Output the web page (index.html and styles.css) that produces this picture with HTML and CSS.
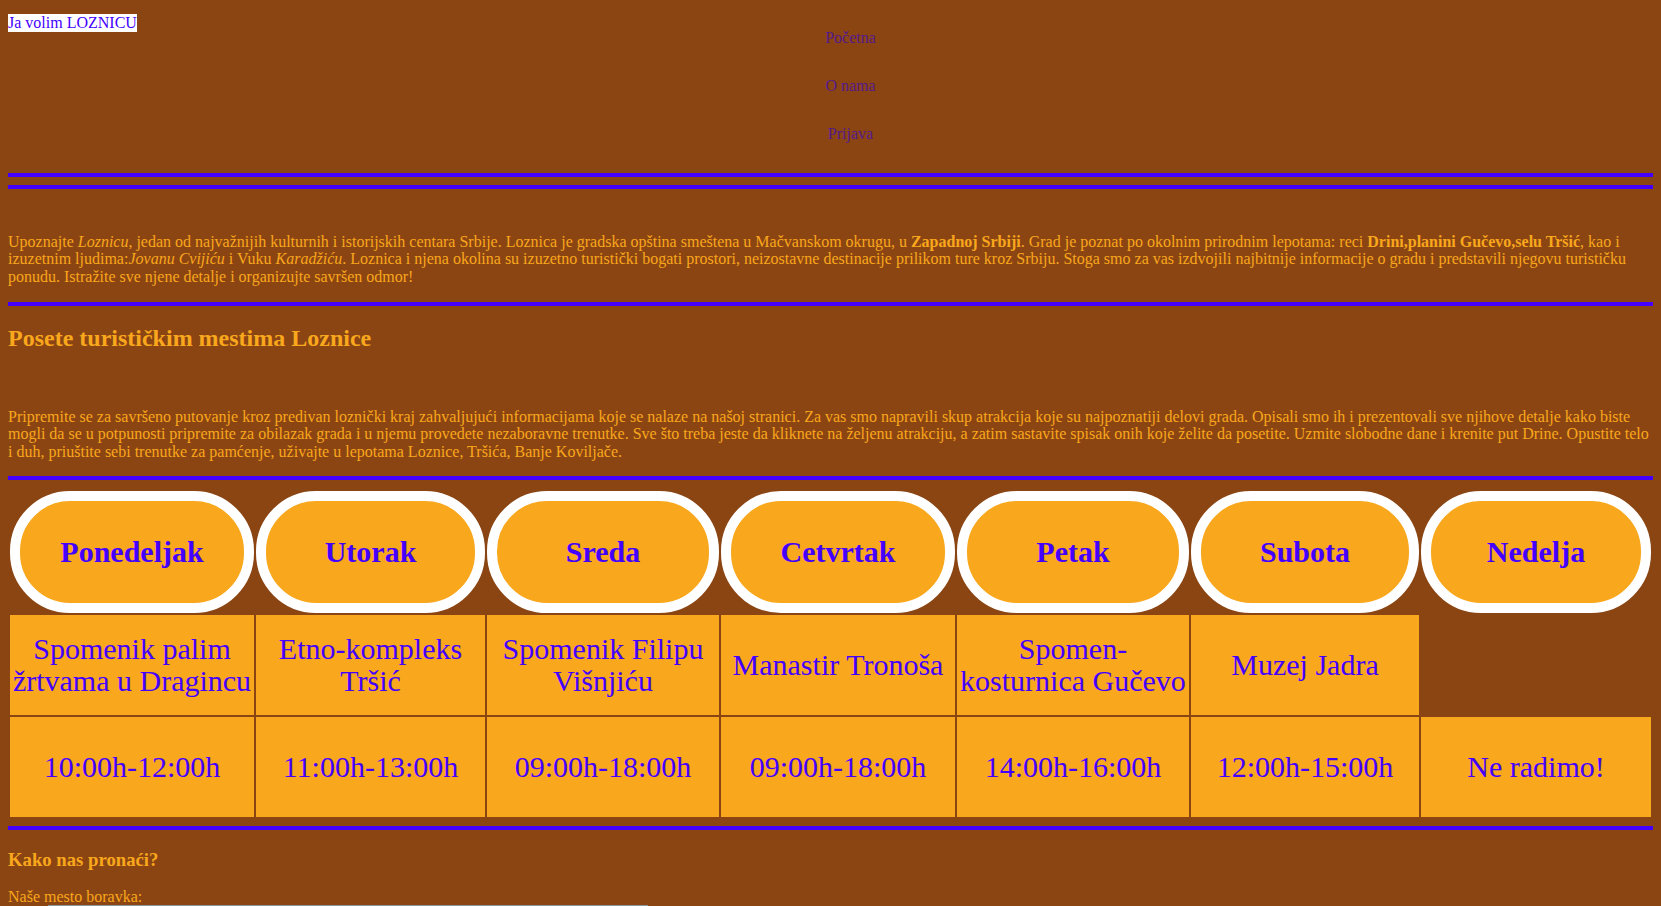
FILE: index.html
```html
<!DOCTYPE html>
<html lang="sr">
<head>
<meta charset="utf-8">
<title>Ja volim LOZNICU</title>
<link rel="stylesheet" href="styles.css">
</head>
<body>
<header class="top">
  <div class="logo"><span class="logo-text">Ja volim LOZNICU</span></div>
  <ul class="nav">
    <li class="nav-item"><a class="nav-link" href="#">Početna</a></li>
    <li class="nav-item"><a class="nav-link" href="#">O nama</a></li>
    <li class="nav-item"><a class="nav-link" href="#">Prijava</a></li>
  </ul>
</header>
<hr class="rule rule-first">
<hr class="rule rule-second">
<p class="text intro">Upoznajte <em>Loznicu</em>, jedan od najvažnijih kulturnih i istorijskih centara Srbije. Loznica je gradska opština smeštena u Mačvanskom okrugu, u <strong>Zapadnoj Srbiji</strong>. Grad je poznat po okolnim prirodnim lepotama: reci <strong>Drini,planini Gučevo,selu Tršić</strong>, kao i izuzetnim ljudima:<em>Jovanu Cvijiću</em> i Vuku <em>Karadžiću</em>. Loznica i njena okolina su izuzetno turistički bogati prostori, neizostavne destinacije prilikom ture kroz Srbiju. Stoga smo za vas izdvojili najbitnije informacije o gradu i predstavili njegovu turističku ponudu. Istražite sve njene detalje i organizujte savršen odmor!</p>
<hr class="rule rule-after-intro">
<h2 class="title">Posete turističkim mestima Loznice</h2>
<p class="text visits">Pripremite se za savršeno putovanje kroz predivan loznički kraj zahvaljujući informacijama koje se nalaze na našoj stranici. Za vas smo napravili skup atrakcija koje su najpoznatiji delovi grada. Opisali smo ih i prezentovali sve njihove detalje kako biste mogli da se u potpunosti pripremite za obilazak grada i u njemu provedete nezaboravne trenutke. Sve što treba jeste da kliknete na željenu atrakciju, a zatim sastavite spisak onih koje želite da posetite. Uzmite slobodne dane i krenite put Drine. Opustite telo i duh, priuštite sebi trenutke za pamćenje, uživajte u lepotama Loznice, Tršića, Banje Koviljače.</p>
<hr class="rule rule-after-visits">
<table class="schedule">
  <tr>
    <th class="day">Ponedeljak</th>
    <th class="day">Utorak</th>
    <th class="day">Sreda</th>
    <th class="day">Cetvrtak</th>
    <th class="day">Petak</th>
    <th class="day">Subota</th>
    <th class="day">Nedelja</th>
  </tr>
  <tr>
    <td class="cell">Spomenik palim žrtvama u Dragincu</td>
    <td class="cell">Etno-kompleks Tršić</td>
    <td class="cell">Spomenik Filipu Višnjiću</td>
    <td class="cell">Manastir Tronoša</td>
    <td class="cell">Spomen-kosturnica Gučevo</td>
    <td class="cell">Muzej Jadra</td>
  </tr>
  <tr>
    <td class="cell">10:00h-12:00h</td>
    <td class="cell">11:00h-13:00h</td>
    <td class="cell">09:00h-18:00h</td>
    <td class="cell">09:00h-18:00h</td>
    <td class="cell">14:00h-16:00h</td>
    <td class="cell">12:00h-15:00h</td>
    <td class="cell">Ne radimo!</td>
  </tr>
</table>
<hr class="rule rule-after-table">
<h3 class="subtitle">Kako nas pronaći?</h3>
<p class="text location">Naše mesto boravka:</p>
<div class="map"></div>
</body>
</html>
```

FILE: styles.css
```css
html {
  background: #8b4513;
}

body {
  margin: 8px;
  background: #8b4513;
  color: #f9a71c;
  font-family: "Liberation Serif", "Times New Roman", serif;
  font-size: 16px;
}

.top {
  display: grid;
}

.logo,
.nav {
  grid-area: 1 / 1;
}

.logo {
  justify-self: start;
  align-self: start;
  margin-top: 6px;
  font-size: 16px;
  line-height: 18px;
}

.logo-text {
  display: inline-block;
  background: #ffffff;
  color: #4400ff;
}

.nav {
  list-style: none;
  margin: 6px 0 0;
  padding: 0 0 0 40px;
  text-align: center;
  font-size: 16px;
}

.nav-item {
  padding: 14.75px 0;
  line-height: 18.4px;
}

.nav-link {
  color: #551a8b;
  text-decoration: none;
}

.rule {
  display: block;
  height: 4px;
  border: none;
  background: #4400ff;
  margin: 0;
}

.rule-first {
  margin-top: 15px;
}

.rule-second {
  margin-top: 8px;
}

.text {
  margin: 0;
  font-size: 16px;
  line-height: 17.5px;
}

.intro {
  margin-top: 44px;
}

.rule-after-intro {
  margin-top: 17px;
}

.title {
  margin: 19px 0 0;
  font-size: 24px;
  line-height: 27.6px;
  font-weight: bold;
}

.visits {
  margin-top: 55px;
}

.rule-after-visits {
  margin-top: 16px;
}

.schedule {
  width: 100%;
  margin-top: 9px;
  border-spacing: 2px;
  border-collapse: separate;
  table-layout: fixed;
}

.day {
  box-sizing: border-box;
  height: 122px;
  padding: 1px;
  background: #f9a71c;
  color: #4400ff;
  border: 10px solid #ffffff;
  border-radius: 60px;
  font-size: 30px;
  font-weight: bold;
  text-align: center;
  vertical-align: middle;
}

.day:nth-child(1) { width: 244px; }
.day:nth-child(2) { width: 229px; }
.day:nth-child(3) { width: 232px; }
.day:nth-child(4) { width: 234px; }
.day:nth-child(5) { width: 232px; }
.day:nth-child(6) { width: 228px; }
.day:nth-child(7) { width: 230px; }

.cell {
  box-sizing: border-box;
  height: 100px;
  padding: 1px;
  background: #f9a71c;
  color: #4400ff;
  font-size: 30px;
  line-height: 32px;
  text-align: center;
  vertical-align: middle;
}

.rule-after-table {
  margin-top: 7px;
}

.subtitle {
  margin: 19px 0 0;
  font-size: 18.72px;
  line-height: 21.5px;
  font-weight: bold;
}

.location {
  margin-top: 18px;
  line-height: 16px;
}

.map {
  width: 600px;
  height: 300px;
  margin-left: 40px;
  border-top: 1px solid #8a9a9a;
  background: linear-gradient(to right, #8a9a9a 344px, #3a3a3a 344px) top left / 100% 2px no-repeat, #e5e3df;
}
```
